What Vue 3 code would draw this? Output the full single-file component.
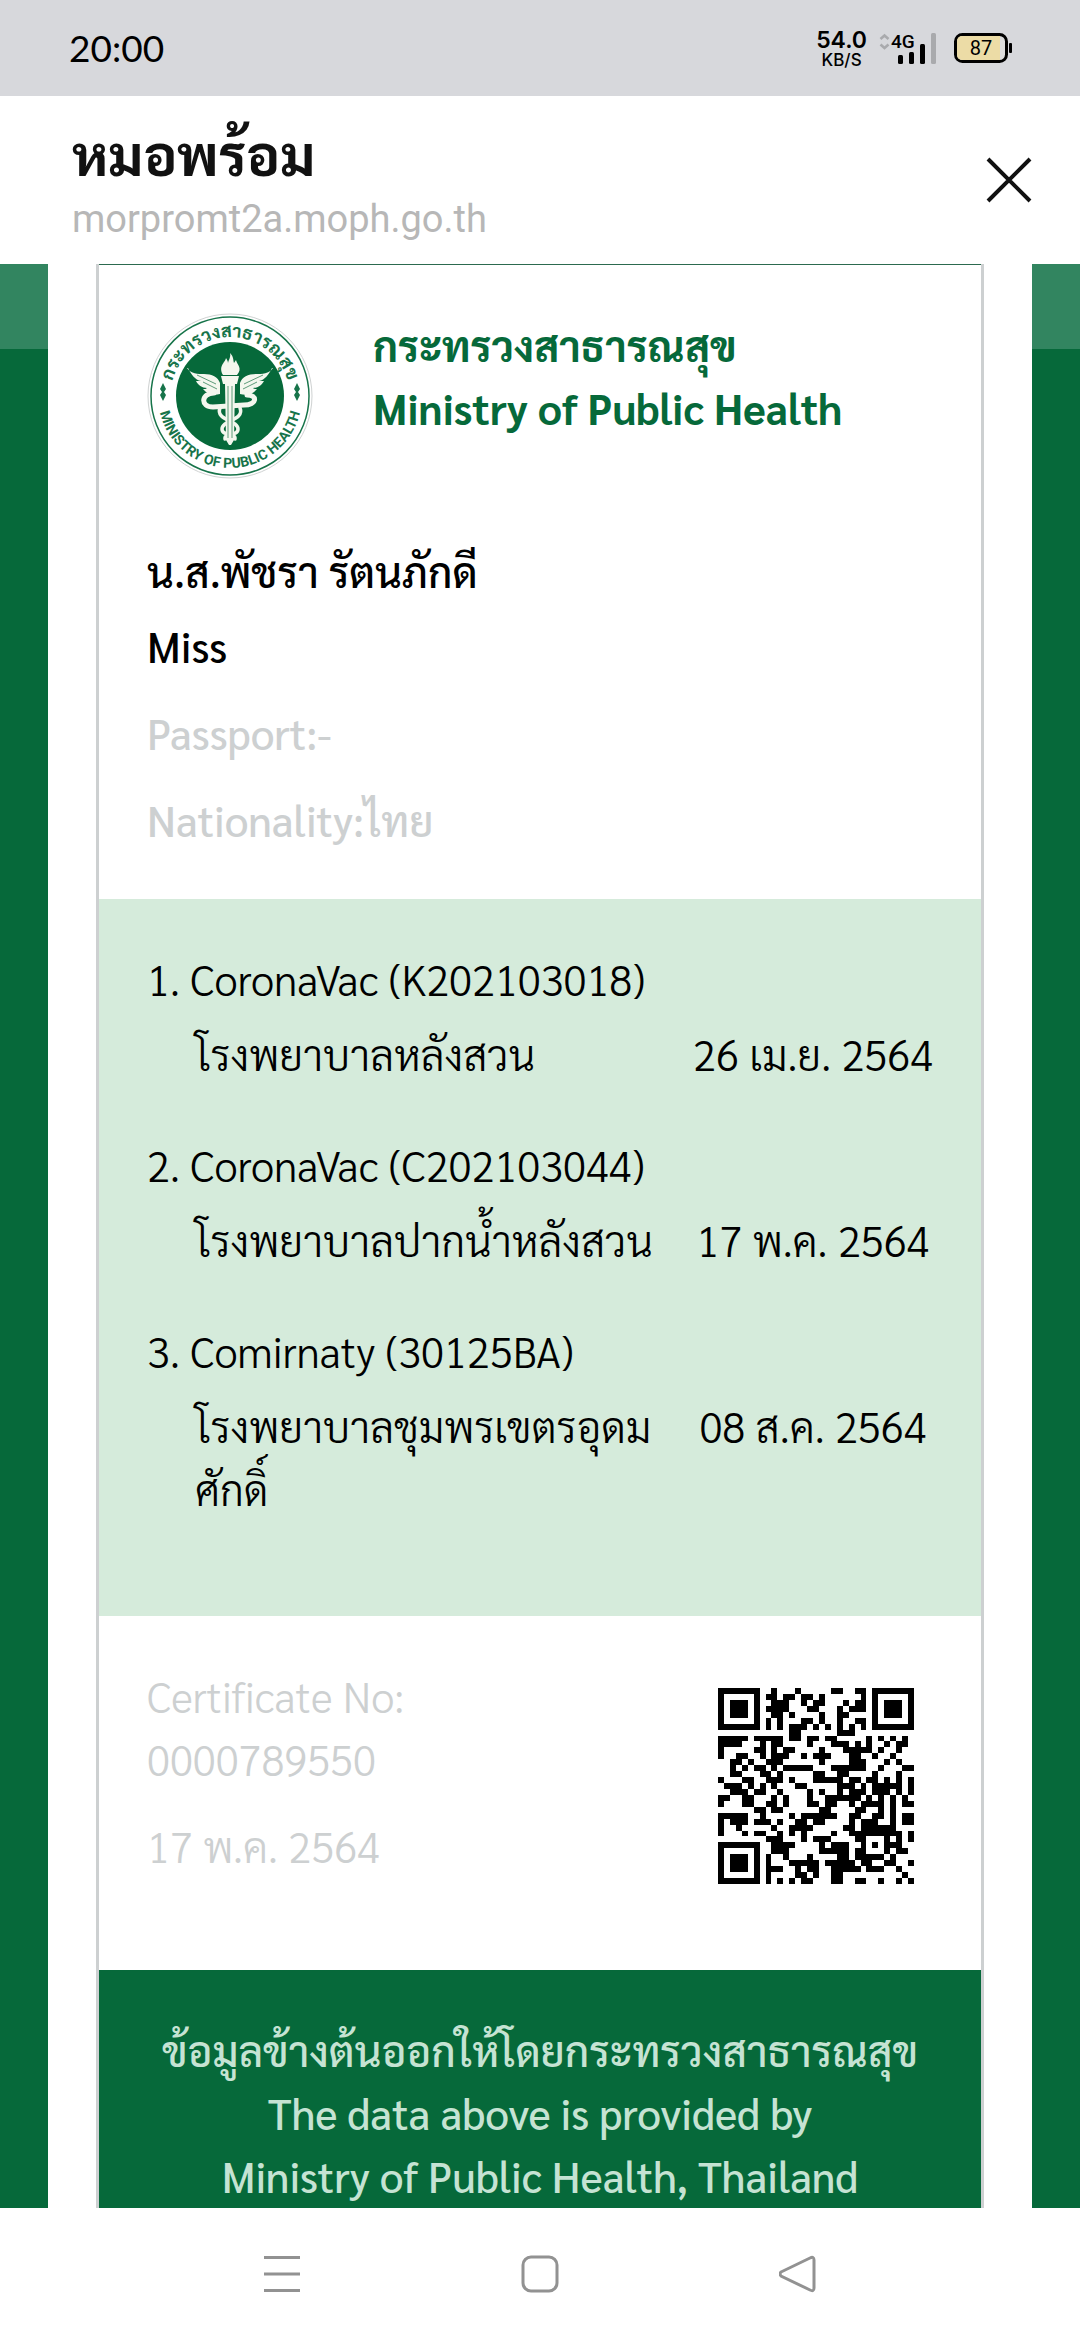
<script setup>
const doses = [
  { name: 'CoronaVac (K202103018)', place: ['โรงพยาบาลหลังสวน'], date: '26 เม.ย. 2564' },
  { name: 'CoronaVac (C202103044)', place: ['โรงพยาบาลปากน้ำหลังสวน'], date: '17 พ.ค. 2564' },
  { name: 'Comirnaty (30125BA)', place: ['โรงพยาบาลชุมพรเขตรอุดม', 'ศักดิ์'], date: '08 ส.ค. 2564' }
]

const qrRows = [
  'xxxxxxx..x...x.....xx..xx.xxxxxxx',
  'x.....x.xx.xx.xx.x......x.x.....x',
  'x.xxx.x..xxx..x.xx...x.xx.x.xxx.x',
  'x.xxx.x.xxxx...xx...x.xxx.x.xxx.x',
  'x.xxx.x..xx.x....x..xx....x.xxx.x',
  'x.....x.x.x...xx.x..x..xx.x.....x',
  'xxxxxxx.x.x.xxx.x.x.x.x.x.xxxxxxx',
  '............xx......xxx..........',
  'xxxxx.xxxxx.xx.xx.xx.....x.x.x.x.',
  'xxxx...x.xx....x...xxx.x.x..x.xx.',
  'x.....xx.x.xx....x...xxxxx.x..x..',
  'x..xx..x.xxx..x.xxx...xx..x..x...',
  '..xx.x..xxx......x....xxx...x.x..',
  '..x.x.xx.x.xxxxx...xxxxxx..x...xx',
  '..xx...xx.x.....xx..xx....x...x..',
  'x...xx..xxx.x...xxxxx.xx.xx.x.x.x',
  '.xxx.x.x.x...xx.....xxx.x.xxxxx.x',
  '..xxx.xx..x....x.x..x.xxx.xxx.x.x',
  'xx..xx...x.x...x..xxxxxx.x.x.x.x.',
  'x...xx..xx.x...xx.xx..x.xxxx.x.xx',
  '......xx.xx......xx....xx..x.x...',
  'xxxxx..x....x.xxxxxx..xx..xx.x.xx',
  'x.xxx.xxx.x..xx.xx....x.xxx..x.xx',
  'x..x.....x..xxxx.....xx.xxxxxx...',
  'x...x.xx..x.x.x....x..xxxxxxxxx.x',
  '........xxx...x.xxx....xx...x.x.x',
  'xxxxxxx..xxxx....x.xxx..x.x.xxx..',
  'x.....x..xxx.....xxxxx.xx...x.xx.',
  'x.xxx.x.x..x...x....xx.xxxxx.x...',
  'x.xxx.x.x...xxxxx.xxxxx.xx..xx..x',
  'x.xxx.x.xxx..x.xx..xxxxx.xxx..x..',
  'x.....x.x....xx.x..xx..........x.',
  'xxxxxxx.x.x.x.xx...xx..xx..x..x.x'
]
const qrPath = qrRows
  .flatMap((row, y) => [...row].map((c, x) => (c === 'x' ? `M${x} ${y}h1v1h-1z` : '')))
  .join('')
</script>

<template>
  <div class="screen">
    <div class="status">
      <time class="clock">20:00</time>
      <div class="indicators">
        <div class="speed"><span class="rate">54.0</span><span class="unit">KB/S</span></div>
        <svg class="signal" viewBox="0 0 58 32" role="img" aria-label="4G signal">
          <g fill="none" stroke="#a9aaad" stroke-width="2.6">
            <path d="M1.5 7 5.5 3.5 9.5 7M1.5 12.500 5.500 16 9.500 12.500" />
          </g>
          <text x="12" y="16" font-size="19" font-weight="500">4G</text>
          <rect x="19" y="23" width="5" height="9" rx="1.500" />
          <rect x="30" y="20" width="5" height="12" rx="1.500" />
          <rect x="41" y="12" width="5" height="20" rx="1.500" />
          <rect x="52" y="1" width="5" height="31" rx="1.500" fill="#a9aaad" />
        </svg>
        <svg class="battery" viewBox="0 0 58 30" role="img" aria-label="Battery 87%">
          <rect x="1.500" y="1.500" width="51" height="27" rx="7" fill="#dcdcdc" stroke="#000" stroke-width="3" />
          <path d="M8 3H46V27H8a5 5 0 0 1-5-5V8a5 5 0 0 1 5-5z" fill="#ecdca6" />
          <rect x="55" y="10" width="3" height="10" rx="1" />
          <text x="27" y="22" font-size="20" text-anchor="middle">87</text>
        </svg>
      </div>
    </div>

    <header class="topbar">
      <div class="site">
        <h1>หมอพร้อม</h1>
        <p class="host">morpromt2a.moph.go.th</p>
      </div>
      <button class="close" type="button" aria-label="Close">
        <svg viewBox="0 0 46 46"><path d="M2 2 44 44M44 2 2 44" stroke="#111" stroke-width="4" /></svg>
      </button>
    </header>

    <main class="viewport">
      <div class="sheet">
        <article class="card">
          <section class="identity">
            <div class="issuer">
              <svg class="seal" viewBox="-83 -83 166 166" role="img" aria-label="Ministry of Public Health seal">
                <defs>
                  <path id="arc-top" d="M-59 12A60 60 0 1 1 59 12" />
                  <path id="arc-bottom" d="M-72 0A72 72 0 0 0 72 0" />
                </defs>
                <circle r="82" fill="#fff" stroke="#cfd2d2" />
                <circle r="79" fill="none" stroke="#17744a" stroke-width="1.500" />
                <circle r="54" fill="#06693a" />
                <text class="seal-th"><textPath href="#arc-top" startOffset="50%" text-anchor="middle">กระทรวงสาธารณสุข</textPath></text>
                <text class="seal-en"><textPath href="#arc-bottom" startOffset="50%" text-anchor="middle">MINISTRY OF PUBLIC HEALTH</textPath></text>
                <g fill="#17744a">
                  <path d="M-67-13-64-7-66-4-64-1-67 5-70-1-68-4-70-7z" />
                  <path d="M67-13 70-7 68-4 70-1 67 5 64-1 66-4 64-7z" />
                </g>
                <g fill="#f4f7ee">
                  <path d="M-43-28C-39-22-32-22-26-22c8 0 14 3 16 9V-2c-7 2-13 0-17-5 2 0 3 0 4-1-5 0-9-3-11-7h5c-6-1-10-7-13-13z" />
                  <path d="M43-28C39-22 32-22 26-22c-8 0-14 3-16 9V-2c7 2 13 0 17-5-2 0-3 0-4-1 5 0 9-3 11-7h-5c6-1 10-7 13-13z" />
                  <path d="M-7-21C-12-30-5-33-4-38c1 2 2 3 2 5 1-4 3-6 2-10 4 4 3 7 4 10l2-3c1 5 7 8 1 15z" />
                  <path d="M-9-20H9L7-12H5L4 44 1 49H-1L-4 44-5-12H-7z" />
                </g>
                <g fill="none" stroke="#f4f7ee" stroke-linecap="round">
                  <path d="M-16-3C-29-3-30 11-17 11L14 9C27 9 28-1 17-1" stroke-width="5" />
                  <path d="M-10 12C-15 24 8 24 8 33 8 41-6 36-5 43" stroke-width="3.500" />
                  <path d="M10 12C15 24-8 24-8 33-8 41 6 36 5 43" stroke-width="3.500" />
                </g>
                <path d="M-33-21-14-12M-27-14-13-7M33-21 14-12M27-14 13-7M-2-10V42M2-10V42" stroke="#5d9b79" fill="none" />
              </svg>
              <div class="issuer-name">
                <p>กระทรวงสาธารณสุข</p>
                <p>Ministry of Public Health</p>
              </div>
            </div>
            <div class="holder">
              <p>น.ส.พัชรา รัตนภักดี</p>
              <p>Miss</p>
            </div>
            <p class="detail">Passport:-</p>
            <p class="detail">Nationality:ไทย</p>
          </section>

          <ol class="doses">
            <li v-for="(dose, i) in doses" :key="dose.name">
              <p>{{ i + 1 }}. {{ dose.name }}</p>
              <div class="dose-row">
                <div><div v-for="line in dose.place" :key="line">{{ line }}</div></div>
                <time>{{ dose.date }}</time>
              </div>
            </li>
          </ol>

          <section class="certificate">
            <div>
              <p>Certificate No:</p>
              <p>0000789550</p>
              <p class="issued">17 พ.ค. 2564</p>
            </div>
            <svg class="qr" viewBox="0 0 33 33" shape-rendering="crispEdges" role="img" aria-label="QR code">
              <path :d="qrPath" />
            </svg>
          </section>

          <footer class="provider">
            <p>ข้อมูลข้างต้นออกให้โดยกระทรวงสาธารณสุข</p>
            <p>The data above is provided by</p>
            <p>Ministry of Public Health, Thailand</p>
          </footer>
        </article>
      </div>
    </main>

    <nav class="navbar">
      <button type="button" aria-label="Recent apps">
        <svg viewBox="0 0 38 38"><path d="M1 2.500H37M1 19H37M1 35.500H37" /></svg>
      </button>
      <button type="button" aria-label="Home">
        <svg viewBox="0 0 38 38"><rect x="2" y="2" width="34" height="34" rx="8" /></svg>
      </button>
      <button type="button" aria-label="Back">
        <svg viewBox="0 0 38 38"><path d="M2 17 31 3Q35 1 35 5V33Q35 37 31 35L2 21Q0 19 2 17z" /></svg>
      </button>
    </nav>
  </div>
</template>

<style>
body {
  margin: 0;
}
</style>

<style scoped>
.screen {
  display: flex;
  flex-direction: column;
  height: 100vh;
  overflow: hidden;
  background: #fff;
  color: #000;
  font-family: Sarabun, "Noto Sans CJK JP", "Noto Sans Thai", sans-serif;
  font-size: 42px;
  line-height: 63px;
}
h1,
p,
ol {
  margin: 0;
  padding: 0;
}
button {
  padding: 0;
  border: 0;
  background: none;
}
svg {
  display: block;
}
.status {
  display: flex;
  flex: none;
  align-items: center;
  justify-content: space-between;
  height: 96px;
  padding: 0 68px 0 69px;
  background: #d7d8dc;
}
.clock {
  font-family: Lato, sans-serif;
  font-size: 37px;
  line-height: 45px;
  padding-bottom: 2px;
}
.indicators {
  display: flex;
  align-items: center;
  font-family: Roboto, sans-serif;
}
.speed {
  display: flex;
  flex-direction: column;
  align-items: center;
  margin-right: 12px;
  padding-top: 2px;
  font-family: Inter, sans-serif;
  font-weight: 600;
}
.rate {
  font-size: 23px;
  line-height: 22px;
}
.unit {
  font-size: 17px;
  font-weight: 500;
  line-height: 18px;
}
.signal {
  width: 58px;
  height: 32px;
  margin-right: 17px;
  overflow: visible;
}
.battery {
  width: 58px;
  height: 30px;
}
.topbar {
  display: flex;
  flex: none;
  align-items: center;
  justify-content: space-between;
  height: 168px;
  padding: 0 48px 0 72px;
}
.site {
  display: flex;
  flex-direction: column;
  gap: 6px;
  padding-top: 6px;
}
h1 {
  color: #111;
  font-size: 56px;
  line-height: 66px;
}
.host {
  color: #b7b7b7;
  font-family: Roboto, sans-serif;
  font-size: 38px;
  line-height: 54px;
}
.close svg {
  width: 46px;
  height: 46px;
}
.viewport {
  flex: 1;
  min-height: 0;
  padding: 0 48px;
  overflow: hidden;
  background: linear-gradient(#328560 85px, #06693a 85px);
}
.sheet {
  padding: 0 48px;
  background: #fff;
}
.card {
  border: solid #cdd0d1;
  border-width: 0 3px;
}
.identity {
  padding: 48px;
  border-top: 1px solid #2c6a4f;
}
.issuer {
  display: flex;
  gap: 60px;
  margin-bottom: 60px;
}
.seal {
  width: 166px;
  height: 166px;
}
.seal text {
  fill: #17744a;
  font-weight: 700;
}
.seal-th {
  font-size: 18px;
}
.seal-en {
  font-family: Roboto, sans-serif;
  font-size: 14px;
}
.issuer-name {
  color: #06693a;
  font-weight: 700;
}
.holder {
  display: flex;
  flex-direction: column;
  gap: 12px;
  font-weight: 500;
}
.detail {
  margin-top: 24px;
  color: #cdd0d1;
  font-weight: 500;
}
.doses {
  padding: 48px 48px 96px;
  background: #d5ebdb;
  list-style: none;
  font-weight: 300;
}
.doses li + li {
  margin-top: 48px;
}
.dose-row {
  display: grid;
  grid-template-columns: 1fr 240px;
  margin-top: 12px;
  padding-left: 48px;
}
.dose-row time {
  text-align: center;
  white-space: nowrap;
}
.certificate {
  display: flex;
  align-items: flex-start;
  justify-content: space-between;
  padding: 48px 67px 86px 48px;
  color: #cdd0d1;
  font-weight: 300;
}
.issued {
  margin-top: 24px;
}
.qr {
  width: 196px;
  height: 196px;
  margin-top: 24px;
  fill: #000;
}
.provider {
  padding: 48px 0;
  background: #06693a;
  color: #c5e3d3;
  font-weight: 500;
  text-align: center;
}
.navbar {
  display: flex;
  flex: none;
  align-items: center;
  justify-content: center;
  gap: 220px;
  height: 132px;
}
.navbar svg {
  width: 38px;
  height: 38px;
  fill: none;
  stroke: #929292;
  stroke-width: 3;
}
</style>
